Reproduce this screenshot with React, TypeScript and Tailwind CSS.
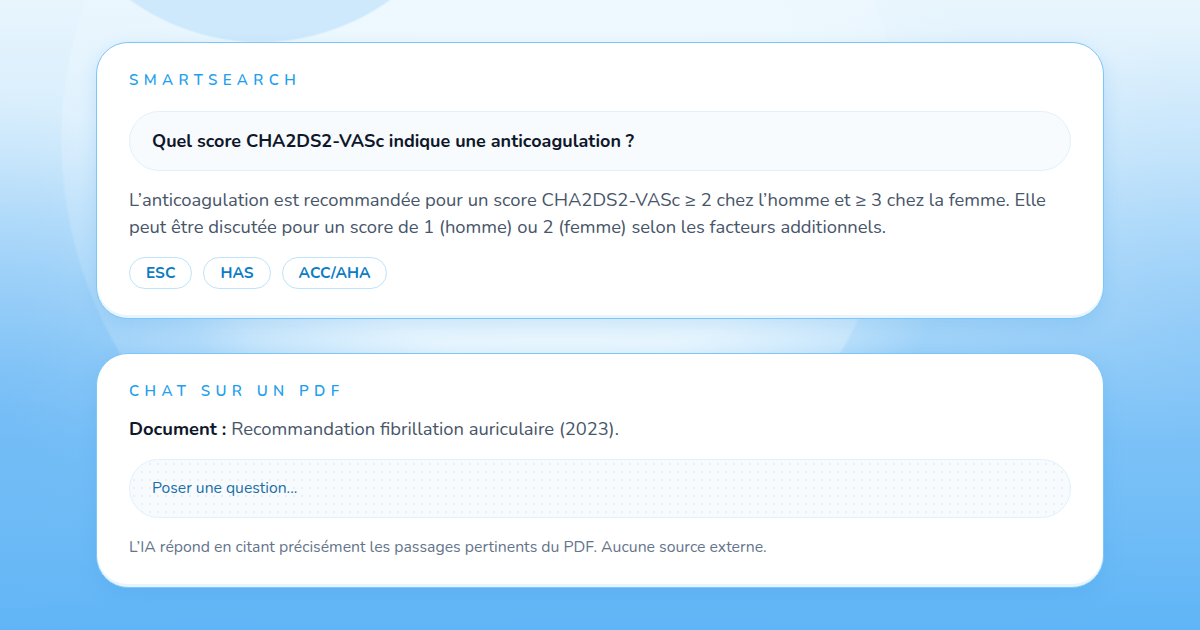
const font = { fontFamily: "Nunito, Lato, 'Noto Sans', sans-serif" };

function Label({ children }: { children: string }) {
  return (
    <div className="text-[15px] leading-5 font-semibold uppercase tracking-[0.36em] text-[#1ea0ee]">
      {children}
    </div>
  );
}

function Pill({ children }: { children: string }) {
  return (
    <span className="inline-flex h-8 items-center rounded-full border border-[#bfe3fb] bg-white px-4 text-[15.5px] font-bold text-[#0c7cc4]">
      {children}
    </span>
  );
}

const card =
  "rounded-[32px] border-[1.5px] border-[#7cc7f8] bg-white px-8 pt-[27px] pb-[29px] shadow-[inset_0_-3px_0_#e8f5fe,0_6px_18px_rgba(56,150,230,0.18)]";

export default function App() {
  return (
    <div
      style={font}
      className="h-[630px] w-[1200px] overflow-hidden bg-[radial-gradient(circle_at_260px_-180px,#cfe9fc_0,#cfe9fc_221px,transparent_223px),radial-gradient(ellipse_260px_320px_at_0_420px,rgba(105,182,245,0.55)_0,transparent_100%),radial-gradient(ellipse_260px_300px_at_1200px_330px,rgba(120,190,247,0.4)_0,transparent_100%),radial-gradient(circle_at_480px_140px,rgba(242,250,255,0.3)_0,rgba(242,250,255,0.3)_417px,transparent_420px),radial-gradient(ellipse_430px_360px_at_560px_150px,rgba(240,250,255,0.95)_0,rgba(236,248,255,0.85)_60%,transparent_100%),linear-gradient(180deg,#e8f5fd_0%,#d2ebfc_25%,#a9d7f9_50%,#7cc2f7_70%,#5fb5f6_100%)] pt-[42px]"
    >
      <div className="mx-auto flex w-[1008px] flex-col gap-[34px]">
        <section className={card}>
          <Label>SmartSearch</Label>
          <div className="mt-[21px] flex h-[60px] items-center rounded-[30px] border border-[#e0f1fc] bg-[#f8fbfd] px-[22px] text-[18px] font-bold text-[#0f172a]">
            Quel score CHA2DS2-VASc indique une anticoagulation ?
          </div>
          <p className="mt-[15px] text-[18.4px] leading-[27px] text-[#475569]">
            L’anticoagulation est recommandée pour un score CHA2DS2-VASc ≥ 2 chez l’homme et ≥ 3 chez la femme. Elle
            <br />
            peut être discutée pour un score de 1 (homme) ou 2 (femme) selon les facteurs additionnels.
          </p>
          <div className="mt-[17px] flex gap-[11px]">
            <Pill>ESC</Pill>
            <Pill>HAS</Pill>
            <Pill>ACC/AHA</Pill>
          </div>
        </section>

        <section className={card}>
          <Label>Chat sur un PDF</Label>
          <p className="mt-[14px] text-[18.4px] leading-[27px] text-[#475569]">
            <span className="font-bold text-[#0f172a]">Document :</span> Recommandation fibrillation auriculaire (2023).
          </p>
          <div className="mt-[17px] flex h-[59px] items-center rounded-[30px] border border-[#e0f1fc] bg-[#f8fbfd] bg-[radial-gradient(#e9f0f5_0.8px,transparent_0.8px)] bg-[length:8px_8px] px-[22px] text-[15.7px] text-[#1b6fa8]">
            Poser une question...
          </div>
          <p className="mt-[18px] text-[15.8px] leading-[22px] text-[#64748b]">
            L’IA répond en citant précisément les passages pertinents du PDF. Aucune source externe.
          </p>
        </section>
      </div>
    </div>
  );
}
